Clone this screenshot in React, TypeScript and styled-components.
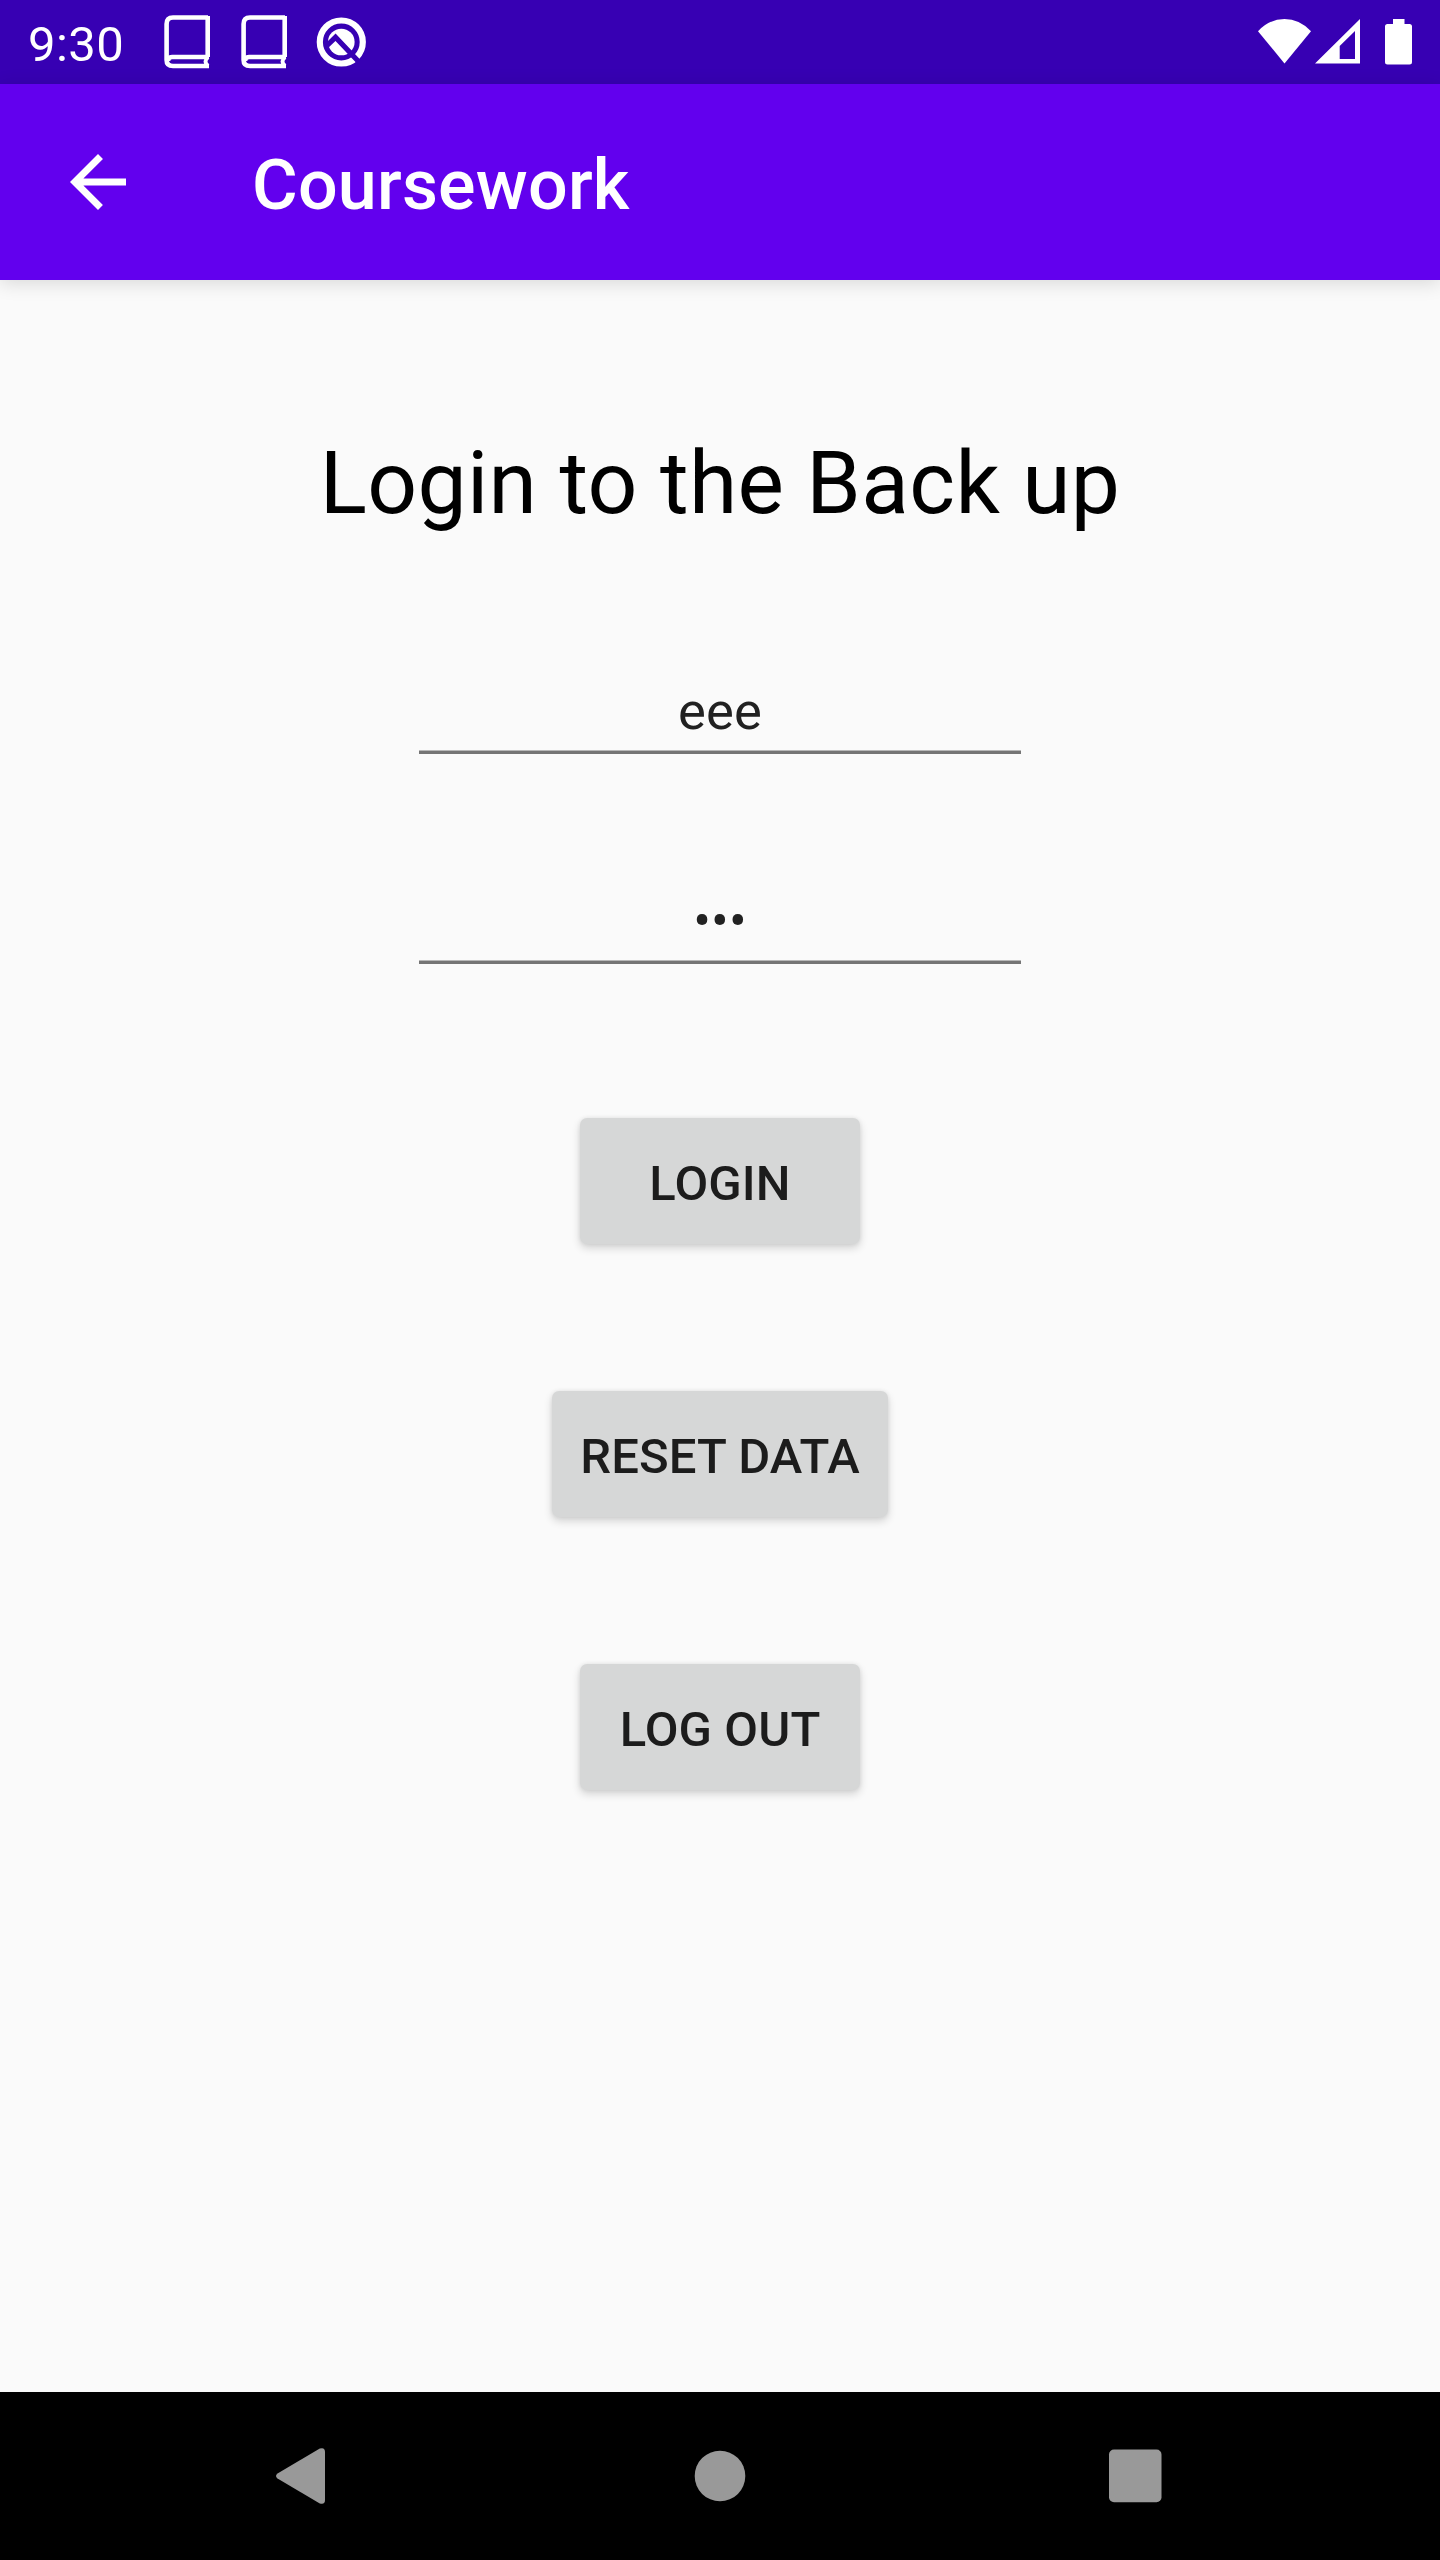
import React from "react";
import styled, { createGlobalStyle } from "styled-components";

const GlobalStyle = createGlobalStyle`
  * { box-sizing: border-box; }
  html, body { margin: 0; padding: 0; }
  body { background: #fafafa; font-family: Roboto, "Liberation Sans", sans-serif; }
  button, input { font-family: inherit; }
`;

const Screen = styled.div`
  width: 1440px;
  height: 2560px;
  display: flex;
  flex-direction: column;
  overflow: hidden;
  background: #fafafa;
`;

const StatusBar = styled.header`
  height: 84px;
  flex: none;
  display: flex;
  align-items: center;
  justify-content: space-between;
  padding: 0 28px;
  background: #3700b3;
  color: #fff;
`;

const StatusGroup = styled.div`
  display: flex;
  align-items: center;
  height: 100%;
`;

const Clock = styled.span`
  width: 136px;
  padding-top: 5px;
  font-size: 49px;
  line-height: 79px;
  letter-spacing: 0.4px;
`;

const Glyph = styled.svg<{ $gap?: number }>`
  display: block;
  flex: none;
  margin-left: ${(p) => p.$gap ?? 0}px;
`;

const AppBar = styled.div`
  height: 196px;
  flex: none;
  display: flex;
  align-items: center;
  padding-left: 56px;
  background: #6200ee;
  color: #fff;
  box-shadow: 0 3px 18px rgba(0, 0, 0, 0.14);
`;

const IconButton = styled.button`
  width: 196px;
  padding: 0;
  border: 0;
  background: none;
  color: inherit;
`;

const Title = styled.h1`
  margin: 0;
  padding-top: 6px;
  font-size: 70px;
  line-height: 84px;
  font-weight: 500;
  letter-spacing: 0.2px;
`;

const Content = styled.main`
  flex: 1;
  display: flex;
  flex-direction: column;
  align-items: center;
  padding-top: 151px;
`;

const Heading = styled.h2`
  margin: 0;
  font-size: 87.5px;
  line-height: 104px;
  font-weight: 400;
  letter-spacing: 0.38px;
  color: #000;
`;

const Fields = styled.div`
  display: flex;
  flex-direction: column;
  gap: 132px;
  margin: 141px 0 154px;
`;

const Field = styled.div`
  width: 602px;
  height: 78px;
  background: linear-gradient(#b8b8b8 1px, #757575 1px) bottom / 100% 4px no-repeat;
`;

const Input = styled.input`
  display: block;
  width: 100%;
  height: 70px;
  padding: 0;
  border: 0;
  outline: 0;
  background: none;
  font-size: 52.5px;
  line-height: 70px;
  letter-spacing: 0.2px;
  text-align: center;
  color: #212121;
`;

const Actions = styled.div`
  display: flex;
  flex-direction: column;
  align-items: center;
  gap: 147px;
`;

const Button = styled.button<{ $wide?: boolean }>`
  width: ${(p) => (p.$wide ? 336 : 280)}px;
  height: 126px;
  padding: 6px 0 0;
  border: 0;
  border-radius: 7px;
  background: #d6d7d7;
  box-shadow: 0 4px 8px rgba(0, 0, 0, 0.16), 0 0 4px rgba(0, 0, 0, 0.07);
  color: #1c1c1c;
  font-size: 49px;
  line-height: 60px;
  font-weight: 500;
  letter-spacing: 0.12px;
  white-space: nowrap;
`;

const NavBar = styled.nav`
  height: 168px;
  flex: none;
  display: flex;
  justify-content: space-between;
  align-items: center;
  padding: 0 263px;
  background: #000;
  color: #999;
`;

const BookIcon = ({ gap }: { gap?: number }) => (
  <Glyph $gap={gap} width="46" height="54" viewBox="0 0 46 54" fill="none" stroke="#fff" strokeWidth="4.6">
    <path d="M44 2.5H9Q2.6 2.5 2.6 9V45Q2.6 51 9 51H45" />
    <path d="M43.7 1V42M4 46V46Q4 42 8 42H45" />
    <path d="M44 42Q39 46.5 44 51" strokeWidth="4" />
  </Glyph>
);

const QIcon = () => (
  <Glyph $gap={29} width="51" height="50" viewBox="0 0 51 50">
    <circle cx="25.3" cy="25" r="21.5" fill="none" stroke="#fff" strokeWidth="6.2" />
    <circle cx="25.3" cy="25" r="13.3" fill="#fff" />
    <path d="M10.5 29L19.5 20.3L43 45" fill="none" stroke="#3700b3" strokeWidth="5.2" />
  </Glyph>
);

export default function App() {
  return (
    <Screen>
      <GlobalStyle />
      <StatusBar>
        <StatusGroup>
          <Clock>9:30</Clock>
          <BookIcon />
          <BookIcon gap={31} />
          <QIcon />
        </StatusGroup>
        <StatusGroup>
          <Glyph width="54" height="46" viewBox="0 0 54 46" fill="#fff">
            <path d="M0 12.2Q11.500 0 26.500 0T53 12.200L26.500 44.500Z" />
          </Glyph>
          <Glyph $gap={3} width="45" height="46" viewBox="0 0 45 46" fill="#fff" fillRule="evenodd">
            <path d="M0 44.500L45 0V44.500ZM24.700 27V40H40V12Z" />
          </Glyph>
          <Glyph $gap={25} width="27" height="46" viewBox="0 0 27 46" fill="#fff">
            <path d="M8 0H19.500V5H24.500Q27 5 27 7.500V43Q27 45.500 24.500 45.500H2.500Q0 45.500 0 43V7.500Q0 5 2.500 5H8Z" />
          </Glyph>
        </StatusGroup>
      </StatusBar>
      <AppBar>
        <IconButton aria-label="Back">
          <Glyph width="84" height="84" viewBox="0 0 24 24" fill="currentColor">
            <path d="M20 11H7.830l5.590-5.590L12 4l-8 8 8 8 1.410-1.410L7.830 13H20v-2z" />
          </Glyph>
        </IconButton>
        <Title>Coursework</Title>
      </AppBar>
      <Content>
        <Heading>Login to the Back up</Heading>
        <Fields>
          <Field>
            <Input aria-label="Username" defaultValue="eee" />
          </Field>
          <Field>
            <Input aria-label="Password" defaultValue="•••" />
          </Field>
        </Fields>
        <Actions>
          <Button>LOGIN</Button>
          <Button $wide>RESET DATA</Button>
          <Button>LOG OUT</Button>
        </Actions>
      </Content>
      <NavBar>
        <Glyph width="74" height="74" viewBox="0 0 74 74" fill="currentColor">
          <path d="M14.500 34.500L56.800 9.600Q62 8 62 13V61Q62 66 56.800 64.400L14.500 39.500Q11.500 37 14.500 34.500Z" />
        </Glyph>
        <Glyph width="74" height="74" viewBox="0 0 74 74" fill="currentColor">
          <circle cx="37" cy="37" r="25.300" />
        </Glyph>
        <Glyph width="74" height="74" viewBox="0 0 74 74" fill="currentColor">
          <rect x="6" y="10.600" width="52.500" height="52.600" rx="5" />
        </Glyph>
      </NavBar>
    </Screen>
  );
}
